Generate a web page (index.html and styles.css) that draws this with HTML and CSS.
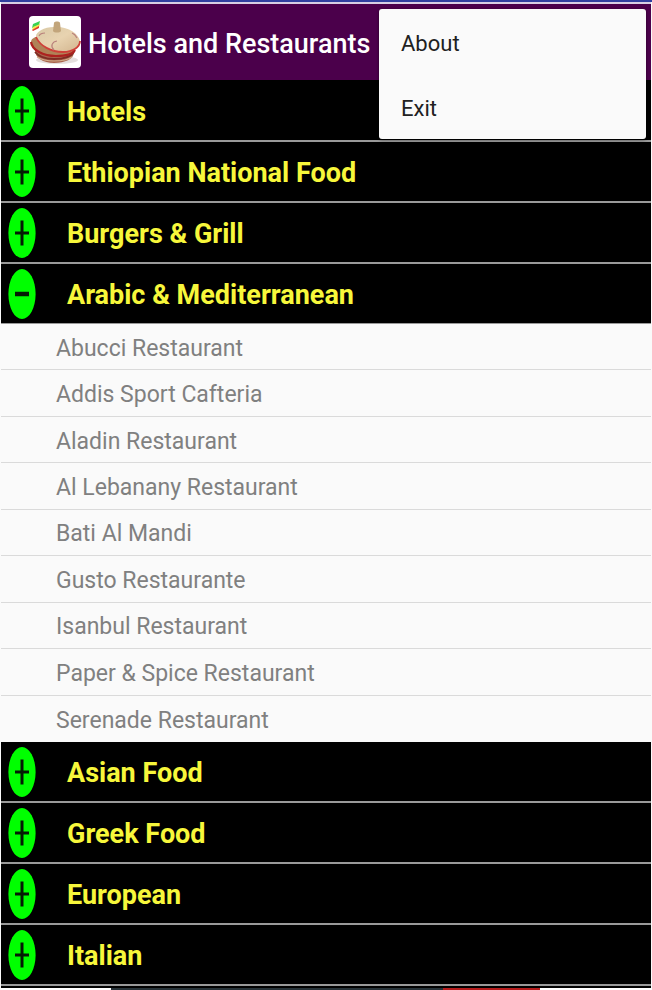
FILE: index.html
```html
<!DOCTYPE html>
<html lang="en">
<head>
  <meta charset="UTF-8">
  <meta name="viewport" content="width=device-width, initial-scale=1.0">
  <title>Hotels and Restaurants</title>
  <link rel="stylesheet" href="styles.css">
</head>
<body>
  <!-- Shared icon shapes -->
  <svg class="icon-defs" aria-hidden="true">
    <symbol id="icon-plus" viewBox="0 0 28 50">
      <ellipse cx="14" cy="25" rx="13.6" ry="25" fill="#00ff00"/>
      <path d="M14 12.5v25M7 25h14" stroke="#041a04" stroke-width="3"/>
    </symbol>
    <symbol id="icon-minus" viewBox="0 0 28 50">
      <ellipse cx="14" cy="25" rx="13.6" ry="25" fill="#00ff00"/>
      <path d="M7 25h14" stroke="#041a04" stroke-width="4.5"/>
    </symbol>
  </svg>

  <div class="app">
    <header class="app-header">
      <svg class="app-logo" viewBox="0 0 52 52" aria-hidden="true">
        <defs>
          <linearGradient id="lid" x1="0" y1="0" x2="1" y2="1">
            <stop offset="0" stop-color="#d9c9a6"/>
            <stop offset="0.5" stop-color="#e8d3b0"/>
            <stop offset="1" stop-color="#d2b48e"/>
          </linearGradient>
        </defs>
        <rect width="52" height="52" rx="4" fill="#fff"/>
        <ellipse cx="28" cy="44" rx="21" ry="4" fill="#e4e0de"/>
        <path d="M6 34c0 8 8 13 19 13s20-4 20-11l-2-4-36-2z" fill="#a9644c"/>
        <path d="M6 36c4 5 11 7 19 7s17-2 20-7" fill="none" stroke="#7e2c24" stroke-width="1.8"/>
        <path d="M8 41c5 3 11 4 17 4s14-1 18-4" fill="none" stroke="#d0ac8a" stroke-width="1.2"/>
        <path d="M2 26c0-3 3-5 7-5l37 12c0 5-8 7-17 7C15 40 3 34 2 26z" fill="#b08257"/>
        <path d="M2 26c1 8 12 14 25 14 10 0 17-2 19-6" fill="none" stroke="#ad211f" stroke-width="2.2"/>
        <path d="M7 20c0-4 8-9 18-9 14-1 24 6 26 14 0 6-7 11-17 11C20 36 8 28 7 20z" fill="url(#lid)"/>
        <path d="M7 21c4 9 15 15 27 15 10 0 17-5 17-11" fill="none" stroke="#cf4039" stroke-width="1.8"/>
        <path d="M25 34c-4-4-2-8 3-9M10 20c1-2 3-3 6-3M43 17c3 1 4 3 5 5" fill="none" stroke="#b9827c" stroke-width="1.2"/>
        <path d="M25 7c0-2 6-2 6 0l1 8c-1 2-7 2-8 0z" fill="#c2a57b"/>
        <path d="M4 8l7-3-1 4-7 3z" fill="#39d353"/>
        <path d="M4 11l7-3-1 3-7 3z" fill="#f5e64a"/>
        <path d="M3 14l7-4v2l-6 3z" fill="#e0382c"/>
      </svg>
      <h1>Hotels and Restaurants</h1>

      <div class="menu" role="menu">
        <button type="button" class="menu-item" role="menuitem">About</button>
        <button type="button" class="menu-item" role="menuitem">Exit</button>
      </div>
    </header>

    <main class="categories">
      <button type="button" class="group" aria-expanded="false">
        <svg class="group-icon" aria-hidden="true"><use href="#icon-plus"/></svg>
        <span class="group-name">Hotels</span>
      </button>
      <button type="button" class="group" aria-expanded="false">
        <svg class="group-icon" aria-hidden="true"><use href="#icon-plus"/></svg>
        <span class="group-name">Ethiopian National Food</span>
      </button>
      <button type="button" class="group" aria-expanded="false">
        <svg class="group-icon" aria-hidden="true"><use href="#icon-plus"/></svg>
        <span class="group-name">Burgers &amp; Grill</span>
      </button>
      <button type="button" class="group group-open" aria-expanded="true" aria-controls="arabic-list">
        <svg class="group-icon" aria-hidden="true"><use href="#icon-minus"/></svg>
        <span class="group-name">Arabic &amp; Mediterranean</span>
      </button>

      <ul class="places" id="arabic-list">
        <li><a href="#">Abucci Restaurant</a></li>
        <li><a href="#">Addis Sport Cafteria</a></li>
        <li><a href="#">Aladin Restaurant</a></li>
        <li><a href="#">Al Lebanany Restaurant</a></li>
        <li><a href="#">Bati Al Mandi</a></li>
        <li><a href="#">Gusto Restaurante</a></li>
        <li><a href="#">Isanbul Restaurant</a></li>
        <li><a href="#">Paper &amp; Spice Restaurant</a></li>
        <li><a href="#">Serenade Restaurant</a></li>
      </ul>

      <button type="button" class="group" aria-expanded="false">
        <svg class="group-icon" aria-hidden="true"><use href="#icon-plus"/></svg>
        <span class="group-name">Asian Food</span>
      </button>
      <button type="button" class="group" aria-expanded="false">
        <svg class="group-icon" aria-hidden="true"><use href="#icon-plus"/></svg>
        <span class="group-name">Greek Food</span>
      </button>
      <button type="button" class="group" aria-expanded="false">
        <svg class="group-icon" aria-hidden="true"><use href="#icon-plus"/></svg>
        <span class="group-name">European</span>
      </button>
      <button type="button" class="group" aria-expanded="false">
        <svg class="group-icon" aria-hidden="true"><use href="#icon-plus"/></svg>
        <span class="group-name">Italian</span>
      </button>
    </main>

    <div class="bottom-strip"></div>
  </div>
</body>
</html>
```

FILE: styles.css
```css
/* Base */
* {
  margin: 0;
  padding: 0;
  box-sizing: border-box;
}

body {
  background-color: #fafafa;
  font-family: Roboto, sans-serif;
}

button {
  border: none;
  font-family: inherit;
  text-align: left;
  cursor: pointer;
}

.icon-defs {
  display: none;
}

/* Page */
.app {
  display: flex;
  flex-direction: column;
  min-height: 100vh;
  border-top: 2px solid #303f9f;
}

/* Header */
.app-header {
  position: relative;
  display: flex;
  align-items: center;
  gap: 7px;
  height: 78px;
  margin: 0 1px;
  padding: 0 28px;
  border-top: 2px solid #d8cfe4;
  background-color: #4b004b;
}

.app-logo {
  flex: none;
  width: 52px;
  height: 52px;
}

.app-header h1 {
  padding-top: 4px;
  color: #fff;
  font-size: 27px;
  font-weight: 500;
  white-space: nowrap;
}

/* Overflow menu */
.menu {
  position: absolute;
  top: 5px;
  right: 5px;
  width: 267px;
  border-radius: 3px;
  background-color: #fafafa;
  box-shadow: 0 1px 3px rgba(0, 0, 0, 0.5);
}

.menu-item {
  display: block;
  width: 100%;
  height: 65px;
  padding: 3px 22px 0;
  background: none;
  color: #212121;
  font-size: 22px;
}

/* Category groups */
.categories {
  flex: 1;
  display: flex;
  flex-direction: column;
  margin: 0 1px;
  border-top: 1px solid #000;
}

.group {
  display: flex;
  align-items: center;
  gap: 31px;
  height: 61px;
  padding: 0 7px;
  border-bottom: 2px solid #999;
  background-color: #000;
  color: #f7f73b;
  font-size: 27px;
  font-weight: 700;
}

.group-open {
  height: 60px;
  border-bottom-width: 1px;
}

.group-icon {
  flex: none;
  width: 28px;
  height: 50px;
}

.group-name {
  padding-top: 3px;
}

/* Places in the open group */
.places {
  flex: 1;
  display: grid;
  grid-auto-rows: 1fr;
  list-style: none;
}

.places li {
  display: flex;
  align-items: center;
  min-height: 46px;
  padding: 3px 55px 0;
  border-bottom: 1px solid #dadada;
}

.places li:last-child {
  border-bottom: none;
}

.places a {
  color: #808080;
  font-size: 23px;
  text-decoration: none;
}

/* Bottom edge */
.bottom-strip {
  height: 4px;
  margin: 0 1px;
  border-top: 2px solid #000;
  background: linear-gradient(to right, #fff 0 17%, #263238 17% 68%, #b71c1c 68% 83%, #fff 83%);
}
```
